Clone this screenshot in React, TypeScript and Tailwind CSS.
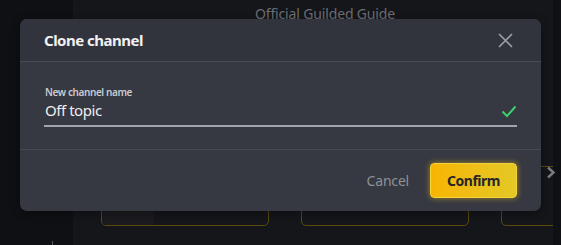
import React from "react";

function Card({ left }: { left?: boolean }) {
  return (
    <div className="w-[168px] h-[60px] shrink-0 rounded-[5px] border border-[#5a4a0e] flex overflow-hidden">
      <div className={left ? "w-[52px] bg-[#1b1b1f]" : "w-[52px]"} />
      <div className="flex-1" />
    </div>
  );
}

export default function App() {
  return (
    <div
      className="relative w-[561px] h-[245px] overflow-hidden bg-[#15161a] flex"
      style={{ fontFamily: '"Noto Sans", "Open Sans", sans-serif' }}
    >
      <div className="w-[73px] h-full shrink-0 bg-[#0f1013] relative">
        <div className="absolute left-[52px] top-[241px] w-[1px] h-[4px] bg-[#55575c]" />
      </div>
      <div className="flex-1 min-w-0 overflow-hidden flex flex-col">
        <div className="h-[30px] flex items-start justify-center pt-[3px] pl-[16px] text-[14px] tracking-[-0.15px] text-[#6c6e74] whitespace-nowrap">
          Official Guilded Guide
        </div>
        <div className="flex-1" />
        <div className="flex gap-[32px] pl-[28px] mb-[19px]">
          <Card left />
          <Card />
          <Card />
        </div>
      </div>
      <div className="absolute right-0 top-0 w-[8px] h-full bg-[#0f1013]" />
      <svg className="absolute left-[545px] top-[165px]" width="12" height="15" viewBox="0 0 12 15">
        <path d="M3 2.5 L8.5 7.5 L3 12.5" fill="none" stroke="#7a7c82" strokeWidth="2.4" />
      </svg>

      <div className="absolute left-[20px] top-[19px] w-[521px] h-[192px] rounded-[7px] bg-[#363842] flex flex-col overflow-hidden shadow-[0_2px_8px_rgba(0,0,0,0.4)]">
        <div className="h-[43px] shrink-0 bg-[#32343d] border-b border-[#4a4c55] flex items-center justify-between pl-[24px] pr-[28px]">
          <span className="text-[15px] font-bold text-[#f1f1f3] tracking-[-0.5px]">Clone channel</span>
          <svg width="15" height="15" viewBox="0 0 15 15">
            <path d="M1 1 L14 14 M14 1 L1 14" stroke="#9c9ea4" strokeWidth="1.6" fill="none" />
          </svg>
        </div>
        <div className="h-[88px] shrink-0 border-b border-[#474953] pl-[24px] pr-[24px] pt-[23px]">
          <div className="text-[10px] font-semibold text-[#c9cacf] leading-[14px] pl-[1px] tracking-[-0.4px]">New channel name</div>
          <div className="flex items-center justify-between h-[22px] border-b-2 border-[#a3a5ab] pb-[4px] box-content">
            <span className="text-[15px] text-[#eeeef0] leading-[20px] pl-[1px] tracking-[-0.45px]">Off topic</span>
            <svg width="16" height="13" viewBox="0 0 16 13" className="mt-[2px]">
              <path d="M1.5 6.5 L6 11 L14.5 1.5" stroke="#3fcf6e" strokeWidth="2" fill="none" />
            </svg>
          </div>
        </div>
        <div className="flex-1 flex items-center justify-end gap-[21px] pr-[24px] pb-[1px]">
          <span className="text-[14px] text-[#8f9197] tracking-[-0.2px]">Cancel</span>
          <div className="w-[87px] h-[35px] rounded-[4px] flex items-center justify-center text-[14px] font-bold text-[#26262a] tracking-[-0.5px] bg-gradient-to-r from-[#f7b500] to-[#e4c824] border border-[#f3d43a] shadow-[0_0_6px_rgba(245,200,30,0.55)]">
            Confirm
          </div>
        </div>
      </div>
    </div>
  );
}
